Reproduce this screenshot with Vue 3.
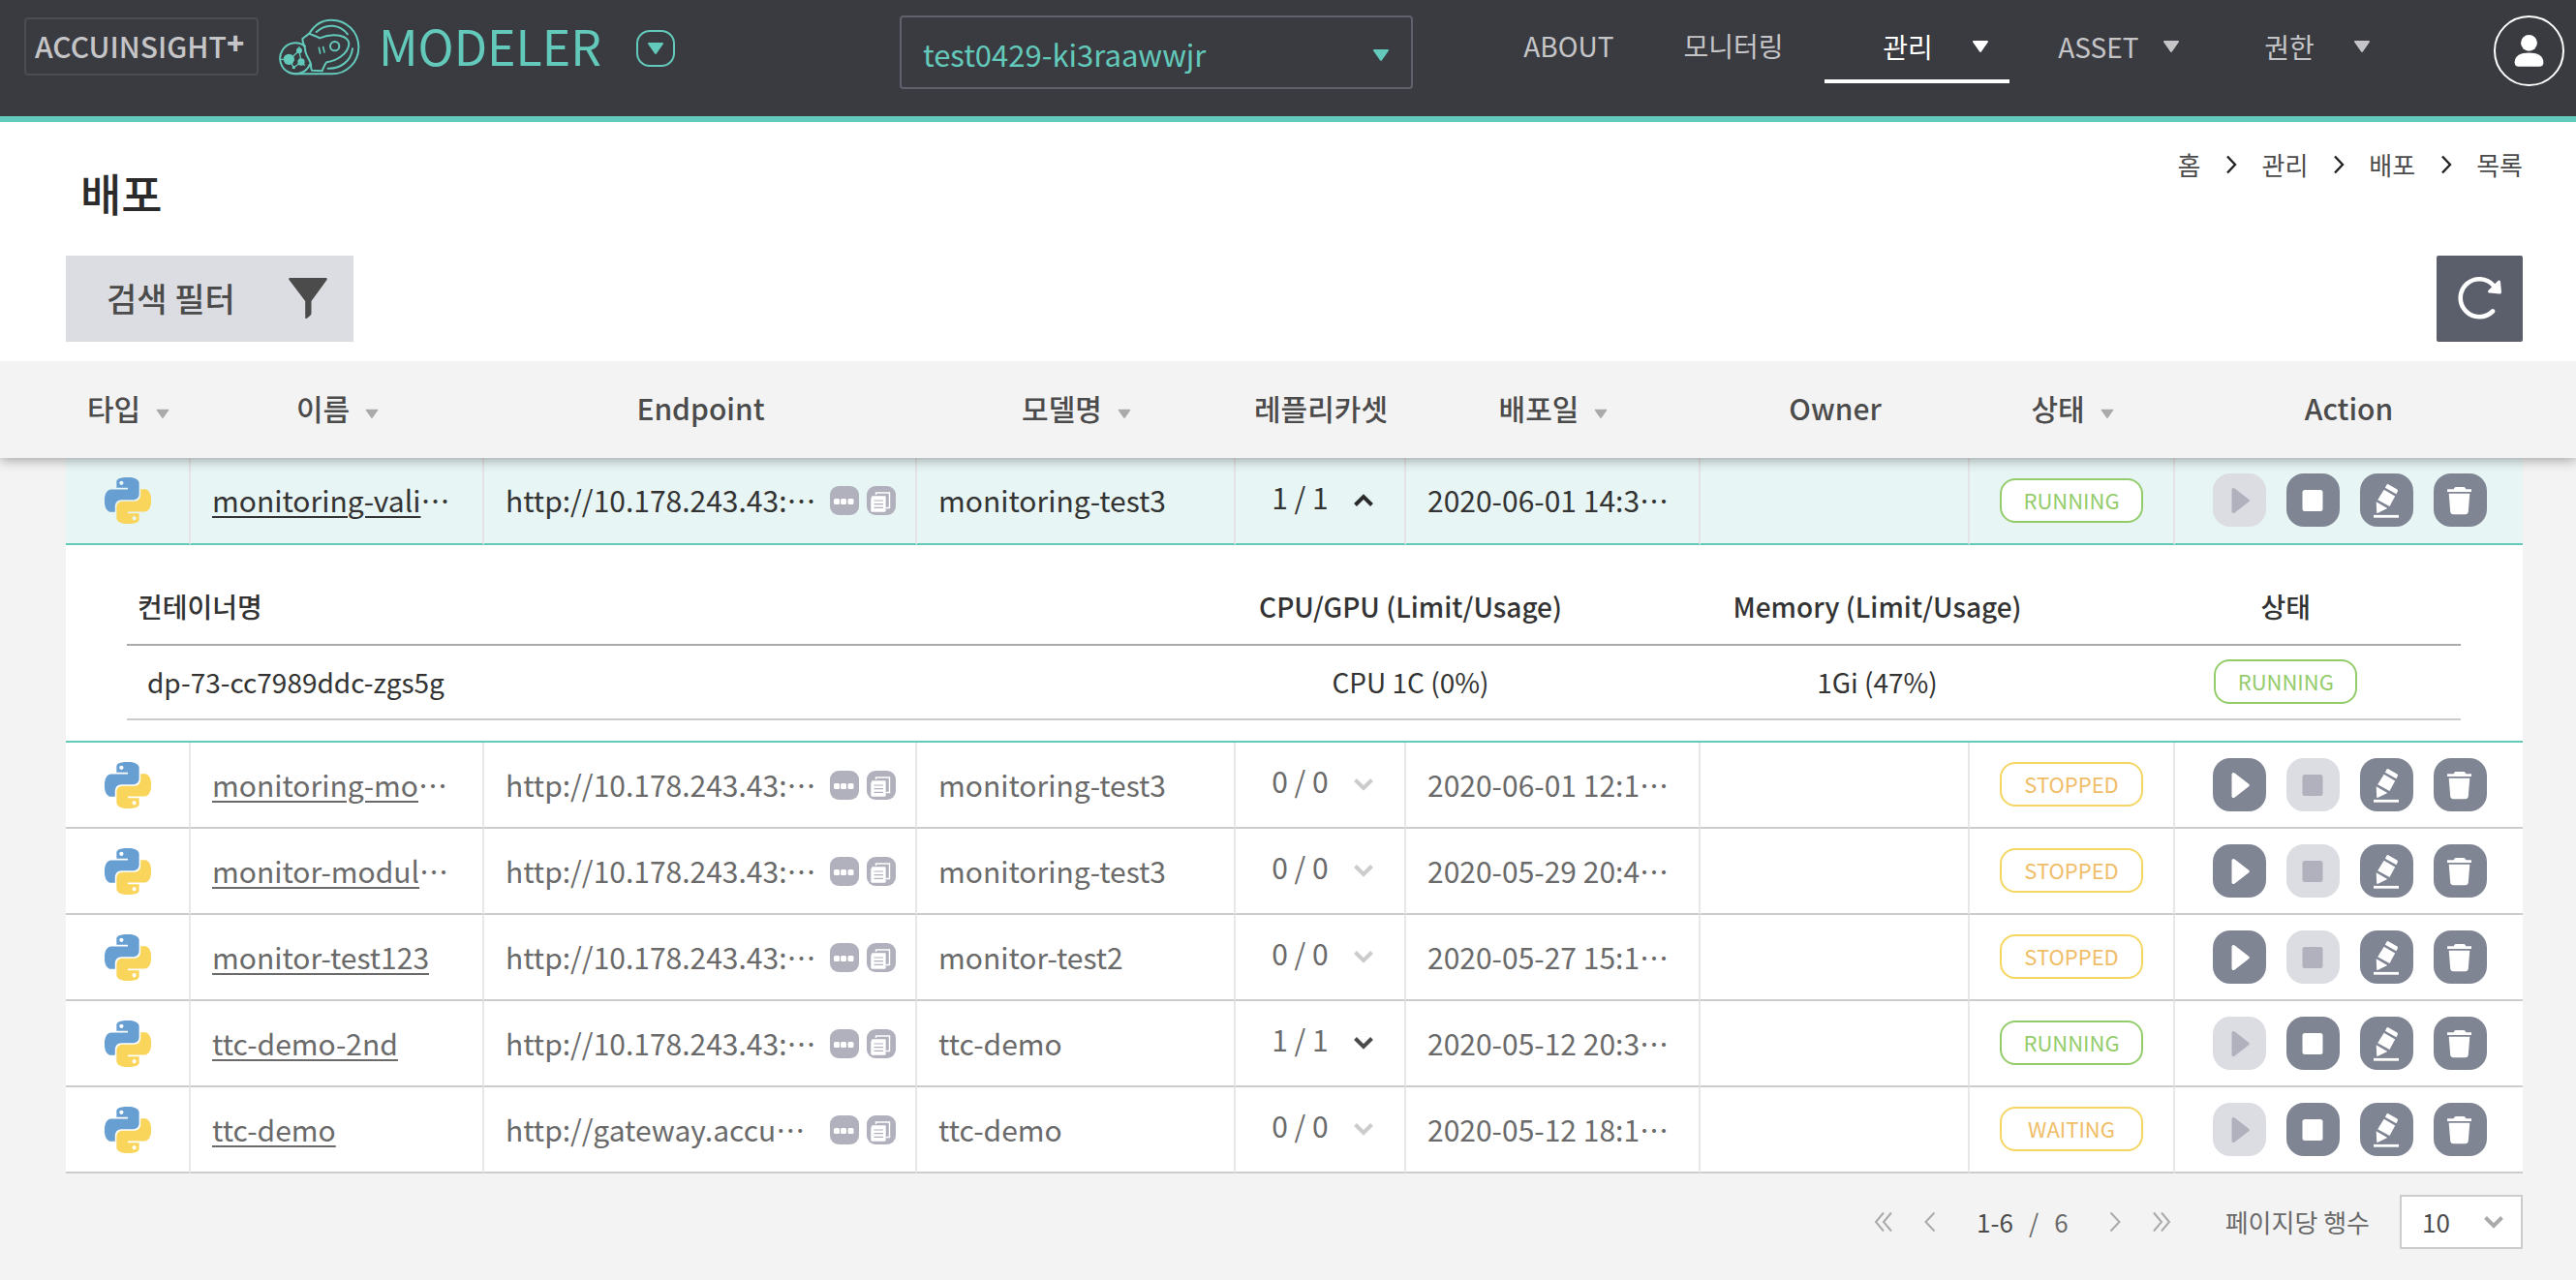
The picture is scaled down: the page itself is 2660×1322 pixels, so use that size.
<script setup>
import { ref } from 'vue'

const workspace = ref('test0429-ki3raawwjr')
const pageSize = ref('10')

const menus = [
  { label: '관리', active: true },
  { label: 'ASSET', active: false },
  { label: '권한', active: false },
]

const crumbs = ['홈', '관리', '배포', '목록']

const columns = [
  { label: '타입', sort: true },
  { label: '이름', sort: true },
  { label: 'Endpoint', sort: false },
  { label: '모델명', sort: true },
  { label: '레플리카셋', sort: false },
  { label: '배포일', sort: true },
  { label: 'Owner', sort: false },
  { label: '상태', sort: true },
  { label: 'Action', sort: false },
]

const rows = [
  { name: 'monitoring-vali', cut: true, endpoint: 'http://10.178.243.43:', model: 'monitoring-test3', replica: '1 / 1', live: true, date: '2020-06-01 14:3', status: 'RUNNING', play: false, stop: true, open: true },
  { name: 'monitoring-mo', cut: true, endpoint: 'http://10.178.243.43:', model: 'monitoring-test3', replica: '0 / 0', live: false, date: '2020-06-01 12:1', status: 'STOPPED', play: true, stop: false },
  { name: 'monitor-modul', cut: true, endpoint: 'http://10.178.243.43:', model: 'monitoring-test3', replica: '0 / 0', live: false, date: '2020-05-29 20:4', status: 'STOPPED', play: true, stop: false },
  { name: 'monitor-test123', cut: false, endpoint: 'http://10.178.243.43:', model: 'monitor-test2', replica: '0 / 0', live: false, date: '2020-05-27 15:1', status: 'STOPPED', play: true, stop: false },
  { name: 'ttc-demo-2nd', cut: false, endpoint: 'http://10.178.243.43:', model: 'ttc-demo', replica: '1 / 1', live: true, date: '2020-05-12 20:3', status: 'RUNNING', play: false, stop: true },
  { name: 'ttc-demo', cut: false, endpoint: 'http://gateway.accu', model: 'ttc-demo', replica: '0 / 0', live: false, date: '2020-05-12 18:1', status: 'WAITING', play: false, stop: true },
]

const containers = [
  { name: 'dp-73-cc7989ddc-zgs5g', cpu: 'CPU 1C (0%)', memory: '1Gi (47%)', status: 'RUNNING' },
]
</script>

<template>
  <div class="page">
    <svg class="sprite" aria-hidden="true">
      <symbol id="i-caret" viewBox="0 0 18 14">
        <path d="M2 1h14c1 0 1.300.8.8 1.500L10 12.300c-.5.8-1.500.8-2 0L1.200 2.500C.7 1.800 1 1 2 1z" />
      </symbol>
      <symbol id="i-python" viewBox="0 0 24 24">
        <path fill="#689fd2" fill-rule="evenodd" d="M14.25.18l.9.2.73.26.59.3.45.32.34.34.25.34.16.33.1.3.04.26.02.2-.01.13V8.5l-.05.63-.13.55-.21.46-.26.38-.3.31-.33.25-.35.19-.35.14-.33.1-.3.07-.26.04-.21.02H8.77l-.69.05-.59.14-.5.22-.41.27-.33.32-.27.35-.2.36-.15.37-.1.35-.07.32-.04.27-.02.21v3.06H3.17l-.21-.03-.28-.07-.32-.12-.35-.18-.36-.26-.36-.36-.35-.46-.32-.59-.28-.73-.21-.88-.14-1.05-.05-1.23.06-1.22.16-1.04.24-.87.32-.71.36-.57.4-.44.42-.33.42-.24.4-.16.36-.1.32-.05.24-.01h.16l.06.01h8.16v-.83H6.18l-.01-2.75-.02-.37.05-.34.11-.31.17-.28.25-.26.31-.23.38-.2.44-.18.51-.15.58-.12.64-.1.71-.06.77-.04.84-.02 1.27.05zm-6.3 1.98l-.23.33-.08.41.08.41.23.34.33.22.41.09.41-.09.33-.22.23-.34.08-.41-.08-.41-.23-.33-.33-.22-.41-.09-.41.09z" />
        <path fill="#f9d55b" fill-rule="evenodd" d="M21.04 6.11l.28.06.32.12.35.18.36.27.36.35.35.47.32.59.28.73.21.88.14 1.04.05 1.23-.06 1.23-.16 1.04-.24.86-.32.71-.36.57-.4.45-.42.33-.42.24-.4.16-.36.09-.32.05-.24.02-.16-.01h-8.22v.82h5.84l.01 2.76.02.36-.05.34-.11.31-.17.29-.25.25-.31.24-.38.2-.44.17-.51.15-.58.13-.64.09-.71.07-.77.04-.84.01-1.27-.04-1.07-.14-.9-.2-.73-.25-.59-.3-.45-.33-.34-.34-.25-.34-.16-.33-.1-.3-.04-.25-.02-.2.01-.13v-5.34l.05-.64.13-.54.21-.46.26-.38.3-.32.33-.24.35-.2.35-.14.33-.1.3-.06.26-.04.21-.02.13-.01h5.84l.69-.05.59-.14.5-.21.41-.28.33-.32.27-.35.2-.36.15-.36.1-.35.07-.32.04-.28.02-.21V6.07h2.09l.14.01zm-6.47 14.25l-.23.33-.08.41.08.41.23.33.33.23.41.08.41-.08.33-.23.23-.33.08-.41-.08-.41-.23-.33-.33-.23-.41-.08-.41.08z" />
      </symbol>
      <symbol id="i-dots" viewBox="0 0 30 30">
        <g fill="#fff">
          <rect x="4" y="13" width="6" height="6" rx="1.500" />
          <rect x="11" y="13" width="6" height="6" rx="1.500" />
          <rect x="18.500" y="13" width="6" height="6" rx="1.500" />
        </g>
      </symbol>
      <symbol id="i-copy" viewBox="0 0 30 30">
        <path d="M9.500 9V7h14v15.500H20" fill="none" stroke="#fff" stroke-width="1.400" />
        <path d="M5.500 10.200h13c.7 0 1.200.5 1.200 1.200v14.100c0 .7-.5 1.200-1.200 1.200h-13c-.7 0-1.200-.5-1.200-1.200V13z" fill="#fff" />
        <path d="M7.500 15h9.500M7.500 18.700h9.500M7.500 22.400h9.500" stroke="#b0b1bd" stroke-width="1.200" />
      </symbol>
      <symbol id="i-play" viewBox="0 0 55 55">
        <path d="M19.500 17c0-2 1.800-2.600 3.200-1.500l14.400 11.300c1 .8 1 1.600 0 2.400L22.700 40.500c-1.400 1.100-3.200.5-3.200-1.500z" />
      </symbol>
      <symbol id="i-stop" viewBox="0 0 55 55">
        <rect x="16.500" y="17" width="21" height="22" rx="2.500" />
      </symbol>
      <symbol id="i-edit" viewBox="0 0 55 55">
        <path d="M29.200 11.300l8.800 5c1 .6 1.200 1.300.8 2.200l-1.300 2.800-11.600-6.600 1.400-2.700c.5-.9 1.100-1.200 1.900-.7z" />
        <path d="M24.700 16.800l11.500 6.600-5.700 10.700-12.300-6.800z" />
        <path d="M16.700 29.300l11.600 6.700-9.800 4.800c-.8.300-1.300 0-1.300-.8z" />
        <path d="M14 42.900h26v2.800H14z" />
      </symbol>
      <symbol id="i-trash" viewBox="0 0 55 55">
        <path d="M14 16.300h6.500l1-1.500c.3-.5.800-.8 1.400-.8h8.200c.6 0 1.100.3 1.400.8l1 1.500h5.500v2.700H14z" />
        <path d="M15.700 20.700h21.600l-1.500 18.500c-.2 1.900-1.300 3-3.200 3H20.400c-1.900 0-3-1.100-3.200-3z" />
      </symbol>
    </svg>

    <header class="topbar">
      <a class="brand-box" href="#">ACCUINSIGHT<sup>+</sup></a>
      <svg class="mascot" viewBox="24 48 252 180" aria-hidden="true">
        <g fill="none" stroke="#63cabb" stroke-width="6" stroke-linecap="round" stroke-linejoin="round">
          <path d="M118 98C134 71 158 56 186 56c48 0 85 37 85 84s-37 83-83 83H75" />
          <path d="M118 98L97 114c0 16 10 24 9 40 3 14 12 22 17 38 1 10-1 15 3 20l32 2c4-10 6-20 14-27 30-5 66-25 69-57-2-26-46-36-91-18-8-6-20-8-32-14z" />
          <path d="M105 137a48 48 0 1 0 15 56" />
          <path d="M140 93c32-30 74-22 97 7M252 145c-5 40-38 62-76 61" />
          <circle cx="197" cy="137" r="14" />
          <path d="M148 142l4 17M161 140l4 16" stroke-width="5" />
          <path d="M28 178h30l29-27M87 151l6 35-23 17-15-25M93 186l10 10M87 151v-12" stroke-width="4" />
        </g>
        <g fill="#63cabb">
          <circle cx="55" cy="178" r="17" />
          <circle cx="87" cy="151" r="9" />
          <circle cx="93" cy="186" r="11" />
          <circle cx="70" cy="203" r="5" />
        </g>
      </svg>
      <span class="product">MODELER</span>
      <button class="switch" type="button" aria-label="제품 전환">
        <svg class="caret"><use href="#i-caret" /></svg>
      </button>

      <label class="workspace">
        <select v-model="workspace" aria-label="워크스페이스">
          <option>test0429-ki3raawwjr</option>
        </select>
        <svg class="caret"><use href="#i-caret" /></svg>
      </label>

      <nav class="menu">
        <a class="plain" href="#">ABOUT</a>
        <a class="plain" href="#">모니터링</a>
        <div class="drops">
          <a v-for="m in menus" :key="m.label" href="#" class="drop" :class="{ active: m.active }">
            <span>{{ m.label }}</span>
            <svg class="caret"><use href="#i-caret" /></svg>
          </a>
        </div>
      </nav>

      <button class="avatar" type="button" aria-label="내 계정">
        <svg viewBox="0 0 72 72">
          <circle cx="36" cy="27.500" r="8.800" fill="#fff" />
          <path d="M20.500 48.500C20.500 41 27 38 36 38s15.500 3 15.500 10.500c0 3.200-1.500 4.500-4.500 4.500H25c-3 0-4.500-1.300-4.500-4.500z" fill="#fff" />
        </svg>
      </button>
    </header>

    <section class="intro">
      <div class="headline">
        <h1>배포</h1>
        <ol class="crumbs">
          <li v-for="(c, i) in crumbs" :key="i">
            <svg v-if="i" viewBox="0 0 12 20"><path d="M2 1.500l8 8.500-8 8.500" fill="none" stroke="#222" stroke-width="2.400" /></svg>
            <a href="#">{{ c }}</a>
          </li>
        </ol>
      </div>
      <div class="tools">
        <button class="filter" type="button">
          <span>검색 필터</span>
          <svg viewBox="0 0 40 42"><path d="M1.500 0h37c1.200 0 1.500.8 1 2L23.500 24v12.500c0 1-.3 1.600-1 2.300l-3.500 3c-.8.600-1.800.2-1.800-.9V24L.5 2C0 .8.300 0 1.500 0z" fill="#4b4b4b" /></svg>
        </button>
        <button class="refresh" type="button" aria-label="새로고침">
          <svg viewBox="0 0 89 89">
            <path d="M58 57.500A19.500 19.500 0 1 1 59 31" fill="none" stroke="#fff" stroke-width="4.600" stroke-linecap="round" />
            <path d="M64.500 27l1 11-11-1z" fill="#fff" stroke="#fff" stroke-width="3" stroke-linejoin="round" />
          </svg>
        </button>
      </div>
    </section>

    <div class="head-band">
      <table class="grid">
        <colgroup><col v-for="n in 9" :key="n" :class="'c' + n" /></colgroup>
        <thead>
          <tr>
            <th v-for="c in columns" :key="c.label" scope="col">
              {{ c.label }}<svg v-if="c.sort" class="sort"><use href="#i-caret" /></svg>
            </th>
          </tr>
        </thead>
      </table>
    </div>

    <main class="content">
      <table class="grid body">
        <colgroup><col v-for="n in 9" :key="n" :class="'c' + n" /></colgroup>
        <tbody>
          <template v-for="(r, i) in rows" :key="i">
            <tr :class="{ open: r.open }">
              <td><svg class="python"><use href="#i-python" /></svg></td>
              <td class="text"><a href="#">{{ r.name }}</a><span v-if="r.cut" class="more">…</span></td>
              <td class="text">
                <div class="endpoint">
                  <p>{{ r.endpoint }}<span class="more">…</span></p>
                  <button type="button" aria-label="더보기"><svg><use href="#i-dots" /></svg></button>
                  <button type="button" aria-label="복사"><svg><use href="#i-copy" /></svg></button>
                </div>
              </td>
              <td class="text">{{ r.model }}</td>
              <td class="ctrl">
                <button class="replica" :class="{ live: r.live }" type="button">
                  <span>{{ r.replica }}</span>
                  <svg viewBox="0 0 22 16"><path :d="r.open ? 'M2.500 12.500L11 4l8.500 8.500' : 'M2.500 3.500L11 12l8.500-8.500'" /></svg>
                </button>
              </td>
              <td class="text">{{ r.date }}<span class="more">…</span></td>
              <td></td>
              <td class="ctrl"><span class="badge" :class="r.status.toLowerCase()">{{ r.status }}</span></td>
              <td class="ctrl">
                <div class="actions">
                  <button type="button" aria-label="시작" :disabled="!r.play"><svg><use href="#i-play" /></svg></button>
                  <button type="button" aria-label="중지" :disabled="!r.stop"><svg><use href="#i-stop" /></svg></button>
                  <button type="button" aria-label="수정"><svg><use href="#i-edit" /></svg></button>
                  <button type="button" aria-label="삭제"><svg><use href="#i-trash" /></svg></button>
                </div>
              </td>
            </tr>
            <tr v-if="r.open" class="detail">
              <td colspan="9">
                <table class="pods">
                  <thead>
                    <tr>
                      <th scope="col">컨테이너명</th>
                      <th scope="col">CPU/GPU (Limit/Usage)</th>
                      <th scope="col">Memory (Limit/Usage)</th>
                      <th scope="col">상태</th>
                    </tr>
                  </thead>
                  <tbody>
                    <tr v-for="p in containers" :key="p.name">
                      <td>{{ p.name }}</td>
                      <td>{{ p.cpu }}</td>
                      <td>{{ p.memory }}</td>
                      <td><span class="badge running">{{ p.status }}</span></td>
                    </tr>
                  </tbody>
                </table>
              </td>
            </tr>
          </template>
        </tbody>
      </table>

      <footer class="pager">
        <button type="button" aria-label="처음"><svg viewBox="0 0 20 22"><path d="M10 1.500L2 11l8 9.500M18 1.500L10 11l8 9.500" /></svg></button>
        <button type="button" aria-label="이전"><svg viewBox="0 0 20 22"><path d="M14.500 1.500l-9 9.500 9 9.500" /></svg></button>
        <p><b>1-6</b><span>/</span><span>6</span></p>
        <button type="button" aria-label="다음"><svg viewBox="0 0 20 22"><path d="M5.500 1.500l9 9.500-9 9.500" /></svg></button>
        <button type="button" aria-label="마지막"><svg viewBox="0 0 20 22"><path d="M2 1.500l8 9.500-8 9.500M10 1.500l8 9.500-8 9.500" /></svg></button>
        <label class="size" for="page-size">페이지당 행수</label>
        <div class="size-box">
          <select id="page-size" v-model="pageSize"><option>10</option></select>
          <svg viewBox="0 0 22 16"><path d="M2.500 3.500L11 12l8.500-8.500" /></svg>
        </div>
      </footer>
    </main>
  </div>
</template>

<style>
body {
  background: #f3f3f3;
}
</style>

<style scoped>
.page {
  min-height: 100vh;
  background: #f3f3f3;
  color: #6a6a6a;
  font-family: "Noto Sans CJK KR", "Noto Sans", sans-serif;
  font-size: 30px;
  line-height: 40px;
}
.page * {
  box-sizing: border-box;
}
.sprite {
  position: absolute;
  width: 0;
  height: 0;
}
button,
select {
  margin: 0;
  padding: 0;
  border: 0;
  background: none;
  color: inherit;
  font: inherit;
  appearance: none;
}
a {
  color: inherit;
  text-decoration: none;
}
svg {
  display: block;
  flex: none;
}
.caret {
  width: 18px;
  height: 14px;
  fill: currentColor;
}

/* top bar */
.topbar {
  display: flex;
  align-items: flex-start;
  height: 126px;
  padding: 16px 12px 0 25px;
  border-bottom: 6px solid #63cabb;
  background: #3a3b40;
}
.brand-box {
  width: 242px;
  height: 60px;
  margin-top: 2px;
  padding-left: 9px;
  border: 2px solid #4b4c54;
  border-radius: 4px;
  color: #c5c5c8;
  font-size: 30px;
  font-weight: 500;
  line-height: 54px;
  white-space: nowrap;
}
.brand-box sup {
  font-size: 30px;
  font-weight: 900;
  line-height: 0;
  vertical-align: 4px;
}
.mascot {
  width: 84px;
  height: 60px;
  margin: 2px 19px 0 21px;
}
.product {
  color: #63cabb;
  font-size: 50px;
  line-height: 60px;
}
.switch {
  display: flex;
  align-items: center;
  justify-content: center;
  width: 40px;
  height: 38px;
  margin: 15px 0 0 36px;
  border: 2px solid #63cabb;
  border-radius: 14px;
  color: #63cabb;
}
.workspace {
  position: relative;
  width: 530px;
  margin-left: 232px;
  color: #63cabb;
}
.workspace select {
  display: block;
  width: 100%;
  height: 76px;
  padding: 4px 20px 0 22px;
  border: 2px solid #5f626d;
  border-radius: 4px;
  font-size: 31px;
}
.workspace .caret {
  position: absolute;
  top: 34px;
  right: 24px;
}
.menu {
  display: flex;
  margin-left: 76px;
  color: #c5c5c8;
  font-size: 28px;
  line-height: 62px;
}
.plain {
  width: 170px;
  text-align: center;
}
.drops {
  display: flex;
  gap: 6px;
  margin-left: 9px;
}
.drop {
  display: flex;
  align-items: center;
  width: 191px;
  height: 70px;
  padding: 0 21px 3px 20px;
  border-bottom: 4px solid transparent;
}
.drop span {
  flex: 1;
  text-align: center;
}
.drop.active {
  border-color: #fff;
  color: #fff;
}
.avatar {
  width: 73px;
  height: 73px;
  margin-left: auto;
  border: 2px solid #fff;
  border-radius: 50%;
}

/* title and tools */
.intro {
  padding: 26px 55px 20px 68px;
  background: #fff;
}
.headline {
  display: flex;
  align-items: flex-start;
  justify-content: space-between;
}
h1 {
  margin: 14px 0 0 15px;
  color: #2b2b2b;
  font-size: 46px;
  font-weight: 500;
  line-height: 64px;
}
.crumbs {
  display: flex;
  gap: 26px;
  margin: 0;
  padding: 0;
  color: #4b4b4b;
  font-size: 26px;
  line-height: 36px;
  list-style: none;
}
.crumbs li {
  display: flex;
  align-items: center;
  gap: 25px;
}
.crumbs svg {
  width: 12px;
  height: 20px;
}
.tools {
  display: flex;
  justify-content: space-between;
  margin-top: 34px;
}
.filter {
  display: flex;
  align-items: center;
  justify-content: space-between;
  width: 297px;
  height: 89px;
  padding: 0 27px 2px 42px;
  background: #dcdde2;
  color: #4b4b4b;
  font-size: 34px;
  font-weight: 500;
}
.filter svg {
  width: 40px;
  height: 42px;
}
.refresh {
  width: 89px;
  height: 89px;
  border-radius: 2px;
  background: #5b5f6b;
}

/* table */
.head-band {
  position: relative;
  padding: 0 55px 0 68px;
  background: #f3f3f3;
  box-shadow: 0 2px 12px rgba(0, 0, 0, 0.35);
  clip-path: inset(0 0 -20px 0);
}
.content {
  padding: 0 55px 20px 68px;
}
.grid {
  width: 100%;
  border-collapse: separate;
  border-spacing: 0;
  table-layout: fixed;
}
.c1 { width: 129px; }
.c2 { width: 303px; }
.c3 { width: 447px; }
.c4 { width: 329px; }
.c5 { width: 176px; }
.c6 { width: 304px; }
.c8 { width: 212px; }
.c9 { width: 359px; }
th {
  padding: 0;
  font-weight: 500;
}
.head-band th {
  height: 100px;
  padding-bottom: 4px;
  color: #4b4b4b;
}
.sort {
  display: inline-block;
  width: 14px;
  height: 11px;
  margin-left: 16px;
  vertical-align: 1px;
  fill: #aaa;
}
.body {
  background: #fff;
}
.body > tbody > tr > td {
  height: 89px;
  padding: 0;
  border-right: 2px solid #e8e8e8;
  border-bottom: 2px solid #ccc;
  white-space: nowrap;
}
.body > tbody > tr > td:last-child {
  border-right: 0;
}
.body > tbody > tr > .text {
  padding: 0 0 2px 22px;
}
.body > tbody > tr > .ctrl {
  padding-bottom: 1px;
}
.body > tbody > .open > td {
  height: 90px;
  border-right-color: #e5e3e5;
  border-bottom-color: #63cabb;
  background: #e7f5f4;
  color: #333;
}
.text a {
  text-decoration: underline;
  text-decoration-thickness: 2px;
  text-underline-offset: 4px;
}
.more {
  display: inline-block;
}
.python {
  width: 48px;
  height: 48px;
  margin: 0 auto;
}
.endpoint {
  display: flex;
  align-items: center;
  gap: 8px;
  padding-right: 20px;
}
.endpoint p {
  flex: 1;
  margin: 0;
}
.endpoint button {
  width: 30px;
  height: 30px;
  margin-top: 2px;
  border-radius: 9px;
  background: #b0b1bd;
}
.endpoint svg {
  width: 30px;
  height: 30px;
}
.replica {
  display: flex;
  align-items: center;
  gap: 25px;
  margin: 0 auto;
  padding-left: 6px;
}
.replica span {
  padding-bottom: 8px;
}
.replica svg {
  width: 22px;
  height: 16px;
  fill: none;
  stroke: #ccc;
  stroke-width: 4;
}
.replica.live svg {
  stroke: #4b4b4b;
}
.open .replica.live svg {
  stroke: #2b2b2b;
}
.badge {
  display: block;
  width: 148px;
  height: 46px;
  margin: 0 auto;
  border: 2px solid;
  border-radius: 16px;
  background: #fff;
  font-size: 22px;
  line-height: 40px;
  text-align: center;
}
.running {
  border-color: #94cc6c;
  color: #94cc6c;
}
.stopped,
.waiting {
  border-color: #f5d662;
  color: #f0bd68;
}
.actions {
  display: flex;
  justify-content: center;
  gap: 21px;
  padding-left: 2px;
}
.actions button {
  width: 55px;
  height: 55px;
  border-radius: 18px;
  background: #7f8593;
  fill: #fff;
}
.actions button:disabled {
  background: #dcdde3;
  fill: #b0b1bd;
}
.actions svg {
  width: 55px;
  height: 55px;
}

/* expanded row */
.body > tbody > .detail > td {
  padding: 26px 64px 21px 63px;
  border-bottom-color: #63cabb;
}
.pods {
  width: 100%;
  border-collapse: separate;
  border-spacing: 0;
  table-layout: fixed;
  color: #333;
  font-size: 28px;
}
.pods th {
  width: 20%;
  height: 78px;
  padding-bottom: 2px;
  border-bottom: 2px solid #aaa;
}
.pods th:first-child {
  width: 45%;
  padding-left: 11px;
  text-align: left;
}
.pods th:last-child {
  width: 15%;
}
.pods td {
  height: 77px;
  padding: 0 0 2px;
  border-bottom: 2px solid #ccc;
  text-align: center;
}
.pods td:first-child {
  padding-left: 21px;
  text-align: left;
}

/* pager */
.pager {
  display: flex;
  align-items: center;
  justify-content: flex-end;
  height: 100px;
  font-size: 26px;
}
.pager button {
  margin-right: 28px;
}
.pager svg {
  width: 20px;
  height: 22px;
  fill: none;
  stroke: #aaa;
  stroke-width: 2;
}
.pager p {
  display: flex;
  gap: 16px;
  margin: 0 38px 0 10px;
}
.pager b {
  color: #4b4b4b;
  font-weight: 400;
}
.size {
  margin: 0 31px 0 28px;
}
.size-box {
  position: relative;
  width: 127px;
}
.size-box select {
  display: block;
  width: 100%;
  height: 56px;
  padding-left: 21px;
  border: 2px solid #ccc;
  border-radius: 0;
  background: #fff;
  color: #4b4b4b;
}
.size-box svg {
  position: absolute;
  top: 20px;
  right: 19px;
  width: 22px;
  height: 16px;
  stroke-width: 4;
}
</style>
